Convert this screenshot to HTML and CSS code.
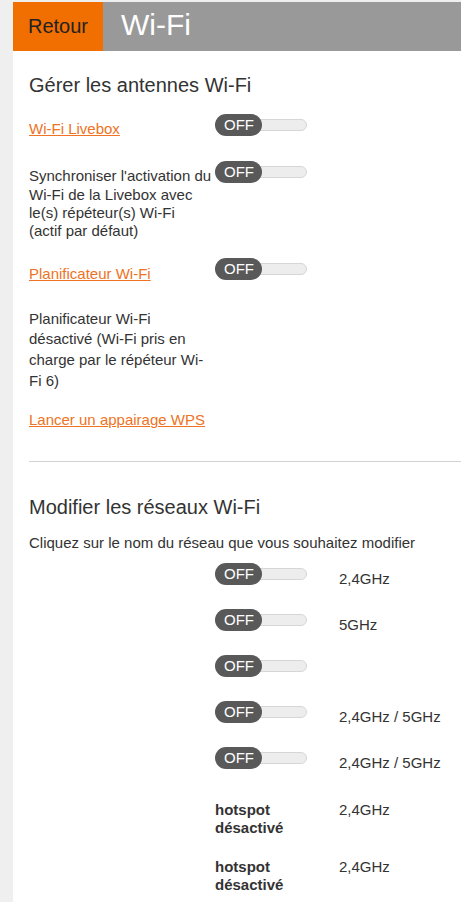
FILE: index.html
```html
<!DOCTYPE html>
<html lang="fr">
<head>
<meta charset="utf-8">
<title>Wi-Fi</title>
<link rel="stylesheet" href="styles.css">
</head>
<body>
<div class="page">
  <header class="topbar">
    <a class="back" href="#">Retour</a>
    <h1 class="title">Wi-Fi</h1>
  </header>
  <main class="content">
    <section class="antennas">
      <h2 class="section-title">Gérer les antennes Wi-Fi</h2>
      <div class="setting setting-livebox">
        <a class="setting-label link" href="#">Wi-Fi Livebox</a>
        <span class="switch"><span class="switch-knob">OFF</span><span class="switch-track"></span></span>
      </div>
      <div class="setting setting-sync">
        <span class="setting-label setting-label-narrow">Synchroniser l'activation du Wi-Fi de la Livebox avec le(s) répéteur(s) Wi-Fi (actif par défaut)</span>
        <span class="switch"><span class="switch-knob">OFF</span><span class="switch-track"></span></span>
      </div>
      <div class="setting setting-planner">
        <a class="setting-label setting-label-low link" href="#">Planificateur Wi-Fi</a>
        <span class="switch"><span class="switch-knob">OFF</span><span class="switch-track"></span></span>
      </div>
      <p class="note">Planificateur Wi-Fi désactivé (Wi-Fi pris en charge par le répéteur Wi-Fi 6)</p>
      <a class="wps link" href="#">Lancer un appairage WPS</a>
    </section>
    <hr class="divider">
    <section class="networks">
      <h2 class="section-title">Modifier les réseaux Wi-Fi</h2>
      <p class="intro">Cliquez sur le nom du réseau que vous souhaitez modifier</p>
      <div class="net-list">
        <div class="net-row">
          <span class="net-name"></span>
          <span class="switch"><span class="switch-knob">OFF</span><span class="switch-track"></span></span>
          <span class="net-band">2,4GHz</span>
        </div>
        <div class="net-row">
          <span class="net-name"></span>
          <span class="switch"><span class="switch-knob">OFF</span><span class="switch-track"></span></span>
          <span class="net-band">5GHz</span>
        </div>
        <div class="net-row">
          <span class="net-name"></span>
          <span class="switch"><span class="switch-knob">OFF</span><span class="switch-track"></span></span>
          <span class="net-band"></span>
        </div>
        <div class="net-row">
          <span class="net-name"></span>
          <span class="switch"><span class="switch-knob">OFF</span><span class="switch-track"></span></span>
          <span class="net-band">2,4GHz / 5GHz</span>
        </div>
        <div class="net-row">
          <span class="net-name"></span>
          <span class="switch"><span class="switch-knob">OFF</span><span class="switch-track"></span></span>
          <span class="net-band">2,4GHz / 5GHz</span>
        </div>
        <div class="net-row net-row-hotspot">
          <span class="net-name"></span>
          <span class="hotspot">hotspot désactivé</span>
          <span class="net-band">2,4GHz</span>
        </div>
        <div class="net-row net-row-hotspot">
          <span class="net-name"></span>
          <span class="hotspot">hotspot désactivé</span>
          <span class="net-band">2,4GHz</span>
        </div>
      </div>
    </section>
  </main>
</div>
</body>
</html>
```
FILE: styles.css
```css
* {
  box-sizing: border-box;
}

html, body {
  margin: 0;
  padding: 0;
}

body {
  background: #efefef;
  font-family: "Liberation Sans", Arial, sans-serif;
  color: #333;
  font-size: 15px;
  line-height: 18.3px;
}

.page {
  margin: 2px 0 0 13px;
  background: #fff;
  min-height: calc(100vh - 2px);
  overflow: hidden;
}

.topbar {
  display: flex;
  height: 49px;
}

.back {
  width: 90px;
  background: #f16e00;
  color: #222;
  font-size: 20px;
  text-decoration: none;
  display: flex;
  align-items: center;
  justify-content: center;
}

.title {
  flex: 1;
  margin: 0;
  background: #999;
  color: #fff;
  font-size: 30px;
  font-weight: normal;
  display: flex;
  align-items: center;
  padding: 0 0 3px 18px;
}

.content {
  padding: 22px 0 0 16px;
}

.section-title {
  margin: 0;
  font-size: 20px;
  line-height: 24px;
  font-weight: normal;
  color: #333;
}

.link {
  color: #ee7324;
  text-decoration: underline;
}

.setting {
  display: flex;
  align-items: flex-start;
}

.setting-livebox {
  margin-top: 17px;
}

.setting-sync {
  margin-top: 23px;
}

.setting-planner {
  margin-top: 18px;
}

.setting-label {
  width: 186px;
  padding-top: 6px;
  flex: none;
}

.setting-label-narrow {
  padding-right: 3.7px;
}

.setting-label-low {
  padding-top: 7px;
}

.note {
  width: 186px;
  margin: 25px 0 0;
  line-height: 20.6px;
}

.wps {
  display: inline-block;
  margin-top: 20px;
}

.divider {
  margin: 32px 0 0;
  border: 0;
  border-top: 1px solid #d2d2d2;
  height: 0;
}

.networks {
  padding-top: 33px;
}

.intro {
  margin: 15px 0 0;
}

.net-list {
  margin-top: 10px;
}

.net-row {
  display: grid;
  grid-template-columns: 186px 124px 1fr;
  align-items: start;
  height: 46px;
}

.net-row-hotspot {
  height: 57px;
}

.net-band {
  padding-top: 7px;
}

.net-row-hotspot .net-band {
  padding-top: 8px;
}

.hotspot {
  font-weight: bold;
  line-height: 18px;
  padding-top: 8px;
}

.switch {
  display: flex;
  align-items: center;
  width: 92px;
  height: 22px;
  flex: none;
}

.switch-knob {
  position: relative;
  z-index: 1;
  width: 47px;
  height: 22px;
  border-radius: 11px;
  background: #595959;
  color: #fff;
  font-size: 15px;
  line-height: 22px;
  padding-left: 9px;
  flex: none;
}

.switch-track {
  width: 65px;
  height: 12px;
  margin-left: -20px;
  border: 1px solid #d6d6d6;
  border-radius: 6px;
  background: #ededed;
  flex: none;
}
```
